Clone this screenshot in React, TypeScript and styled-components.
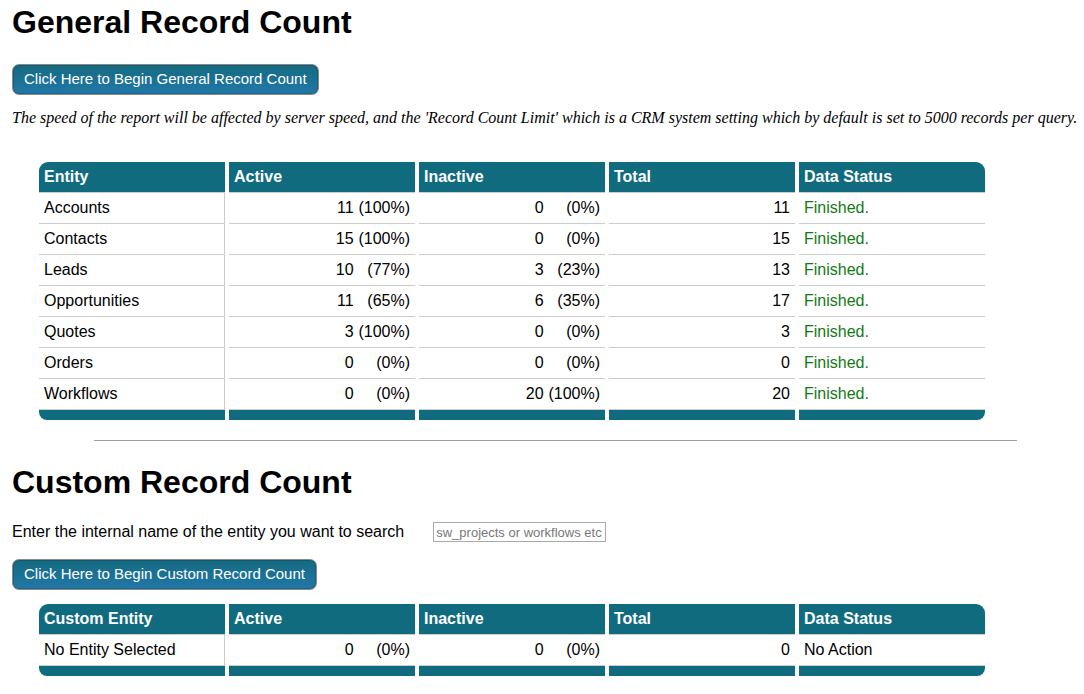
import React from 'react';
import styled, { createGlobalStyle } from 'styled-components';

const GlobalStyle = createGlobalStyle`
  body {
    margin: 0;
    background: #fff;
    font-family: Arial, "Liberation Sans", sans-serif;
    color: #000;
  }
`;

const Page = styled.div`
  padding: 4px 12px 20px;
`;

const Heading = styled.h1<{ $top?: number }>`
  margin: ${(p) => p.$top || 0}px 0 0;
  font-size: 32px;
  font-weight: bold;
  line-height: 37px;
`;

const ActionButton = styled.button<{ $top: number }>`
  display: block;
  margin-top: ${(p) => p.$top}px;
  height: 31px;
  padding: 0 11px 3px;
  border: 1px solid #8a8a8a;
  border-radius: 7px;
  background: linear-gradient(180deg, #156a80 0%, #2178a8 100%);
  color: #fff;
  font-family: Arial, "Liberation Sans", sans-serif;
  font-size: 15px;
  box-shadow: inset 0 0 0 1px rgba(0, 0, 0, 0.15);
  cursor: pointer;
`;

const Note = styled.p`
  margin: 14px 0 0;
  font-family: "Liberation Serif", "Times New Roman", serif;
  font-style: italic;
  font-size: 16px;
  line-height: 18px;
  white-space: nowrap;
`;

const Table = styled.table<{ $top: number }>`
  margin: ${(p) => p.$top}px 0 0 23px;
  border-collapse: separate;
  border-spacing: 4px 0;
  font-size: 16px;
`;

const Th = styled.th`
  width: 186px;
  box-sizing: border-box;
  height: 31px;
  padding: 0 5px;
  background: #106b7e;
  color: #fff;
  font-weight: bold;
  text-align: left;
  line-height: 18px;
  border-bottom: 1px solid #ccc;

  &:first-child {
    border-top-left-radius: 9px;
  }
  &:last-child {
    border-top-right-radius: 9px;
  }
`;

const Td = styled.td<{ $align?: 'left' | 'right'; $tone?: string }>`
  box-sizing: border-box;
  height: 31px;
  padding: 0 5px;
  line-height: 18px;
  border-bottom: 1px solid #ccc;
  text-align: ${(p) => p.$align || 'left'};
  color: ${(p) => p.$tone || '#000'};
  white-space: nowrap;

  &:first-child {
    border-right: 1px solid #ccc;
  }
`;

const FootCell = styled.td`
  height: 10px;
  padding: 0;
  background: #106b7e;

  &:first-child {
    border-bottom-left-radius: 8px;
  }
  &:last-child {
    border-bottom-right-radius: 8px;
  }
`;

const Pct = styled.span`
  display: inline-block;
  width: 52px;
  text-align: right;
`;

const Divider = styled.hr`
  margin: 20px 0 0 82px;
  width: 923px;
  border: 0;
  border-top: 1px solid #a0a0a0;
  height: 0;
`;

const SearchRow = styled.div`
  display: flex;
  align-items: center;
  margin-top: 21px;
  font-size: 16px;
  line-height: 18px;
`;

const SearchInput = styled.input`
  margin-left: 29px;
  width: 173px;
  height: 20px;
  box-sizing: border-box;
  padding: 0 2px;
  border: 1px solid #a9a9a9;
  font-family: Arial, "Liberation Sans", sans-serif;
  font-size: 13px;

  &::placeholder {
    color: #777;
  }
`;

type Row = { name: string; active: number; ap: string; inactive: number; ip: string; total: number };

const rows: Row[] = [
  { name: 'Accounts', active: 11, ap: '(100%)', inactive: 0, ip: '(0%)', total: 11 },
  { name: 'Contacts', active: 15, ap: '(100%)', inactive: 0, ip: '(0%)', total: 15 },
  { name: 'Leads', active: 10, ap: '(77%)', inactive: 3, ip: '(23%)', total: 13 },
  { name: 'Opportunities', active: 11, ap: '(65%)', inactive: 6, ip: '(35%)', total: 17 },
  { name: 'Quotes', active: 3, ap: '(100%)', inactive: 0, ip: '(0%)', total: 3 },
  { name: 'Orders', active: 0, ap: '(0%)', inactive: 0, ip: '(0%)', total: 0 },
  { name: 'Workflows', active: 0, ap: '(0%)', inactive: 20, ip: '(100%)', total: 20 },
];

function CountTable({
  first,
  data,
  status,
  tone,
  top,
}: {
  first: string;
  data: Row[];
  status: string;
  tone: string;
  top: number;
}) {
  return (
    <Table $top={top}>
      <thead>
        <tr>
          <Th>{first}</Th>
          <Th>Active</Th>
          <Th>Inactive</Th>
          <Th>Total</Th>
          <Th>Data Status</Th>
        </tr>
      </thead>
      <tbody>
        {data.map((r) => (
          <tr key={r.name}>
            <Td>{r.name}</Td>
            <Td $align="right">
              {r.active} <Pct>{r.ap}</Pct>
            </Td>
            <Td $align="right">
              {r.inactive} <Pct>{r.ip}</Pct>
            </Td>
            <Td $align="right">{r.total}</Td>
            <Td $tone={tone}>{status}</Td>
          </tr>
        ))}
      </tbody>
      <tfoot>
        <tr>
          <FootCell />
          <FootCell />
          <FootCell />
          <FootCell />
          <FootCell />
        </tr>
      </tfoot>
    </Table>
  );
}

export default function App() {
  return (
    <Page>
      <GlobalStyle />
      <Heading>General Record Count</Heading>
      <ActionButton $top={23}>Click Here to Begin General Record Count</ActionButton>
      <Note>
        The speed of the report will be affected by server speed, and the 'Record Count Limit' which is a CRM
        system setting which by default is set to 5000 records per query.
      </Note>
      <CountTable first="Entity" data={rows} status="Finished." tone="#137a13" top={35} />

      <Divider />

      <Heading $top={23}>Custom Record Count</Heading>
      <SearchRow>
        Enter the internal name of the entity you want to search
        <SearchInput placeholder="sw_projects or workflows etc" />
      </SearchRow>
      <ActionButton $top={17}>Click Here to Begin Custom Record Count</ActionButton>
      <CountTable
        first="Custom Entity"
        data={[{ name: 'No Entity Selected', active: 0, ap: '(0%)', inactive: 0, ip: '(0%)', total: 0 }]}
        status="No Action"
        tone="#000"
        top={14}
      />
    </Page>
  );
}
